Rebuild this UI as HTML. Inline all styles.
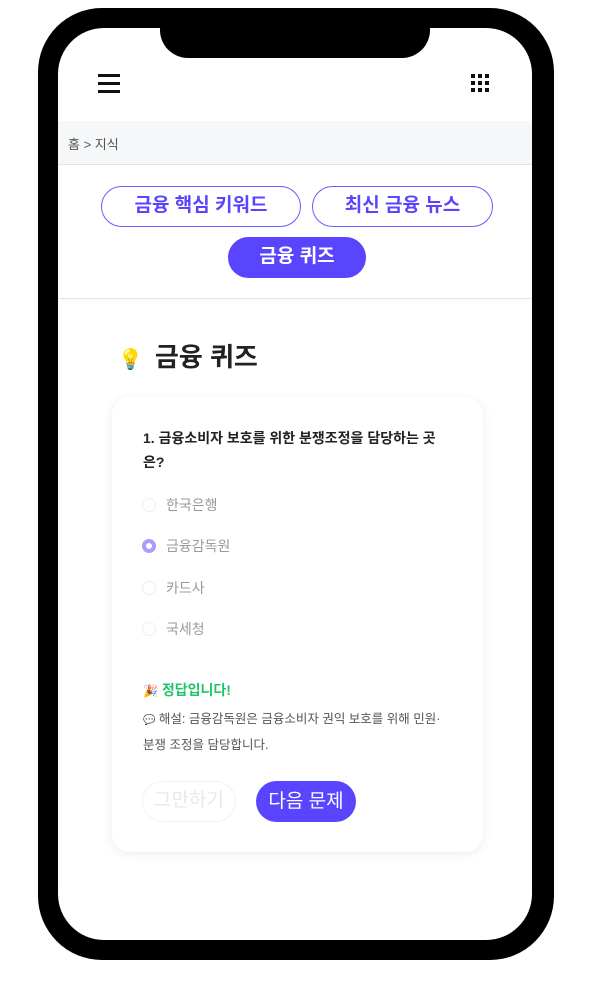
<!DOCTYPE html>
<html><head><meta charset="utf-8"><style>
*{margin:0;padding:0;box-sizing:border-box}
body{width:600px;height:1000px;background:#fff;font-family:"Liberation Sans","Noto Sans CJK KR",sans-serif;position:relative;overflow:hidden}
.frame{position:absolute;left:38px;top:8px;width:516px;height:952px;background:#000;border-radius:64px}
.screen{position:absolute;left:58px;top:28px;width:474px;height:912px;background:#fff;border-radius:46px;overflow:hidden}
.notch{position:absolute;left:160px;top:8px;width:270px;height:50px;background:#000;border-radius:0 0 28px 28px}
.abs{position:absolute}
.ham span{display:block;width:22px;height:3px;background:#111;margin-bottom:5px}
.grid{display:grid;grid-template-columns:repeat(3,4px);gap:3px}
.grid i{width:4px;height:4px;background:#111}
.crumb{position:absolute;left:0;top:93px;width:474px;height:44px;background:#f6f7f9;border-bottom:1px solid #e3e3e3;font-size:13px;color:#555;padding:13px 0 0 10px}
.pill{position:absolute;height:41px;border:1.5px solid #6b5cff;border-radius:21px;color:#5a45ff;font-weight:bold;font-size:19px;text-align:center;line-height:38px;background:#fff;white-space:nowrap}
.fill{background:#5a45ff;color:#fff;border-color:#5a45ff}
.card{position:absolute;left:54px;top:369px;width:371px;height:455px;border-radius:18px;box-shadow:0 2px 10px rgba(0,0,0,.08);background:#fff}
.opt{position:absolute;left:30px;font-size:14px;color:#9a9a9a}
.opt b{position:absolute;left:0;top:3px;width:14px;height:14px;border:1.5px solid #eee;border-radius:50%}
.opt span{position:absolute;left:24px;top:0;white-space:nowrap}
</style></head><body>
<div class="frame"></div>
<div class="screen">
 <div class="abs ham" style="left:40px;top:46px"><span></span><span></span><span></span></div>
 <div class="abs grid" style="left:413px;top:46px"><i></i><i></i><i></i><i></i><i></i><i></i><i></i><i></i><i></i></div>
 <div class="crumb">홈 &gt; 지식</div>
 <div class="pill" style="left:43px;top:158px;width:200px">금융 핵심 키워드</div>
 <div class="pill" style="left:254px;top:158px;width:181px">최신 금융 뉴스</div>
 <div class="pill fill" style="left:170px;top:209px;width:138px">금융 퀴즈</div>
 <div class="abs" style="left:0;top:270px;width:474px;height:1px;background:#e6e6e6;box-shadow:0 1px 3px rgba(0,0,0,.06)"></div>
 <div class="abs" style="left:60px;top:309px;font-size:26px;font-weight:bold;color:#222;white-space:nowrap"><span style="font-size:20px;margin-right:12px">💡</span>금융 퀴즈</div>
 <div class="card">
  <div class="abs" style="left:31px;top:29px;width:300px;font-size:14px;font-weight:bold;color:#222;line-height:24px">1. 금융소비자 보호를 위한 분쟁조정을 담당하는 곳은?</div>
  <div class="opt" style="top:98px"><b></b><span>한국은행</span></div>
  <div class="opt" style="top:139px"><b style="border:4px solid #a99bff"></b><span>금융감독원</span></div>
  <div class="opt" style="top:181px"><b></b><span>카드사</span></div>
  <div class="opt" style="top:222px"><b></b><span>국세청</span></div>
  <div class="abs" style="left:31px;top:283px;font-size:14px;font-weight:bold;color:#1fc46a;white-space:nowrap"><span style="font-size:12px">🎉</span> 정답입니다!</div>
  <div class="abs" style="left:31px;top:310px;width:308px;font-size:12.5px;color:#555;line-height:24px"><span style="font-size:10px">💬</span> 해설: 금융감독원은 금융소비자 권익 보호를 위해 민원·분쟁 조정을 담당합니다.</div>
  <div class="abs" style="left:30px;top:384px;width:94px;height:41px;border:1.5px solid #f2f2f2;border-radius:21px;color:#e8e8e8;font-size:19px;text-align:center;line-height:38px;white-space:nowrap">그만하기</div>
  <div class="abs" style="left:144px;top:384px;width:100px;height:41px;background:#5a45ff;border-radius:21px;color:#fff;font-size:19px;text-align:center;line-height:41px;white-space:nowrap">다음 문제</div>
 </div>
</div>
<div class="notch"></div>
</body></html>
